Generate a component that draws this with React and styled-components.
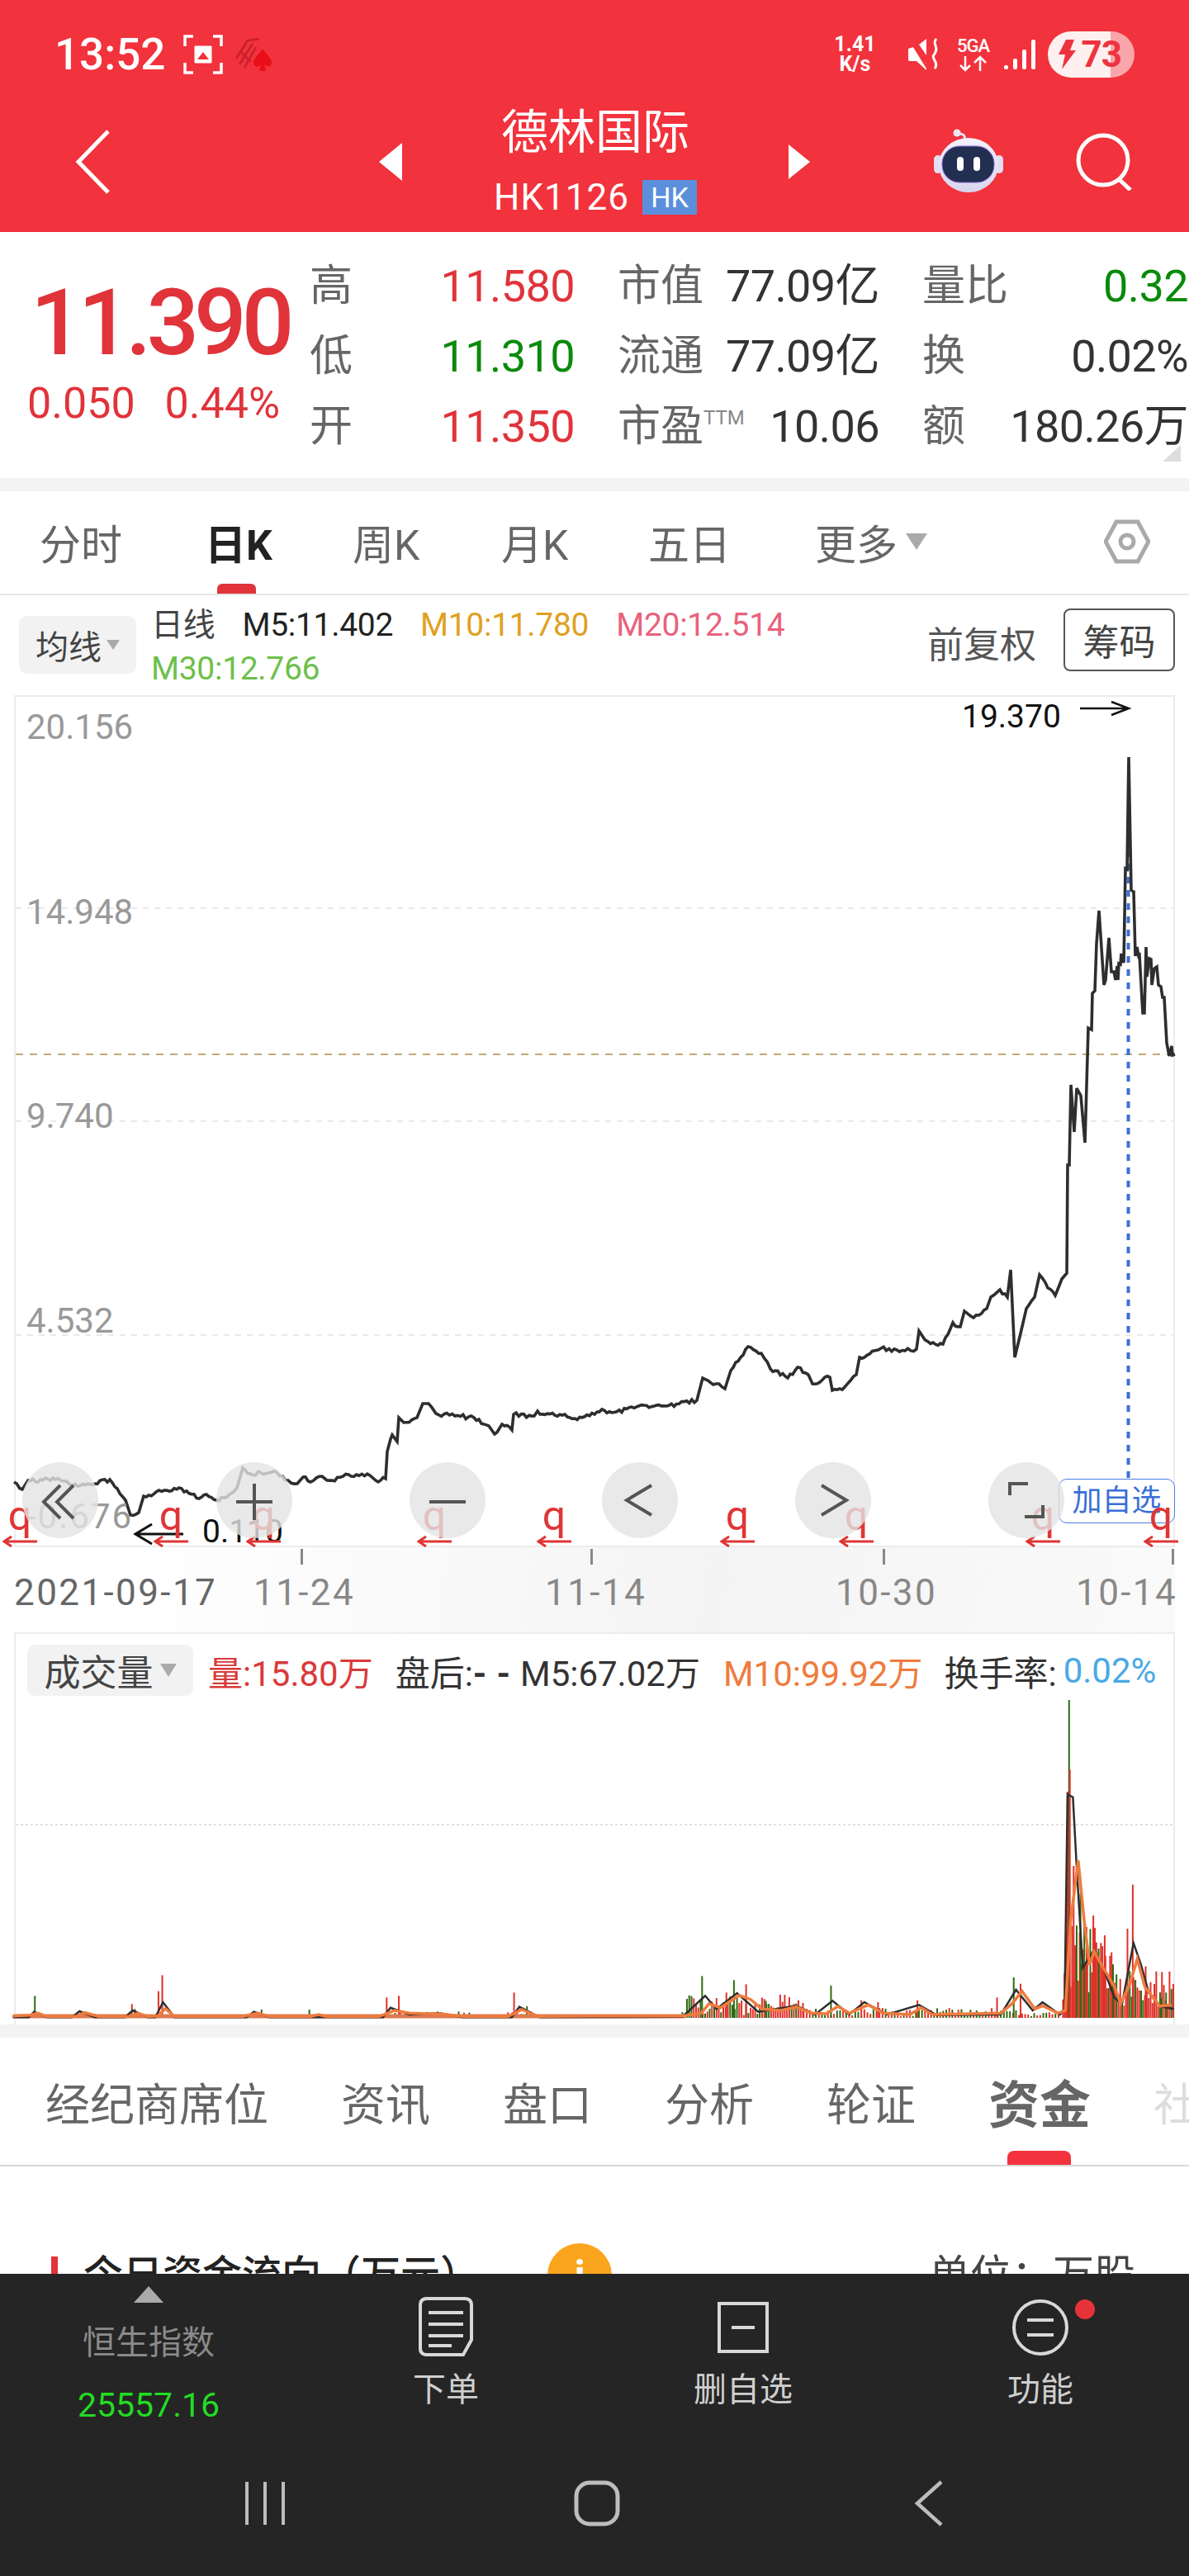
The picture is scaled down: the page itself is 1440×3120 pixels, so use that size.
import React from 'react';
import styled, { createGlobalStyle } from 'styled-components';

const GlobalStyle = createGlobalStyle`
  html, body { margin: 0; padding: 0; background: #fff; }
  body { font-family: Roboto, "Noto Sans CJK SC", sans-serif; }
  * { box-sizing: border-box; }
`;

const RED = '#e0333a';
const GREEN = '#0a8a0a';

const Page = styled.div`
  width: 1440px;
  height: 3120px;
  overflow: hidden;
  display: flex;
  flex-direction: column;
  background: #fff;
`;

/* header */
const Header = styled.header`
  height: 281px;
  background: #f2323c;
  color: #fff;
  flex: none;
`;

const StatusBar = styled.div`
  height: 100px;
  display: flex;
  align-items: center;
  padding: 32px 0 0 66px;
`;

const Clock = styled.span`
  font-size: 53px;
  font-weight: 500;
  line-height: 60px;
  margin-right: 22px;
`;

const Slot = styled.div`
  flex: none;
  display: flex;
  align-items: center;
  justify-content: center;
  width: ${(p) => p.$w}px;
  margin-left: ${(p) => p.$ml || 0}px;
`;

const NetSpeed = styled.div`
  width: 60px;
  margin-left: 675px;
  display: flex;
  flex-direction: column;
  align-items: center;
  font-size: 25px;
  font-weight: 700;
  line-height: 24px;
`;

const NetType = styled.div`
  width: 40px;
  margin-left: 18px;
  display: flex;
  flex-direction: column;
  align-items: center;
  font-size: 22px;
  font-weight: 500;
  line-height: 22px;
  letter-spacing: -1px;
`;

const Battery = styled.div`
  width: 105px;
  height: 56px;
  margin-left: 15px;
  border-radius: 28px;
  overflow: hidden;
  background: linear-gradient(90deg, #fff0f0 0 76px, #f9a6aa 76px);
  color: #ee3340;
  display: flex;
  align-items: center;
  gap: 6px;
  padding-left: 12px;
  font-size: 44px;
  font-weight: 700;
  letter-spacing: -1px;
`;

const NavBar = styled.div`
  height: 181px;
  padding: 10px 0 0 90px;
  display: flex;
  align-items: center;
`;

const TitleBlock = styled.div`
  width: 466px;
  display: flex;
  flex-direction: column;
  align-items: center;
`;

const StockName = styled.div`
  font-size: 57px;
  line-height: 66px;
`;

const StockCode = styled.div`
  display: flex;
  align-items: center;
  font-size: 44px;
  line-height: 50px;
  margin-top: 20px;
  letter-spacing: 1px;
`;

const MarketBadge = styled.span`
  background: #5b8fdc;
  width: 66px;
  height: 42px;
  margin-left: 16px;
  font-size: 34px;
  line-height: 42px;
  text-align: center;
  letter-spacing: 0;
`;

/* quote */
const Quote = styled.section`
  height: 314px;
  flex: none;
  position: relative;
  display: flex;
  border-bottom: 16px solid #f3f3f3;
`;

const PriceBox = styled.div`
  width: 375px;
  padding: 54px 0 0 33px;
  color: ${RED};
`;

const BigPrice = styled.div`
  font-size: 112px;
  font-weight: 500;
  line-height: 112px;
  margin-left: 4px;
  letter-spacing: -6px;
`;

const PriceChange = styled.div`
  font-size: 52px;
  line-height: 60px;
  margin-top: 12px;
  display: flex;
  gap: 36px;
`;

const QuoteGrid = styled.div`
  display: grid;
  grid-template-columns: 321px 317px 322px;
  grid-template-rows: repeat(3, 85px);
  column-gap: 52px;
  padding-top: 23px;
  align-items: center;
`;

const QuoteCell = styled.div`
  display: flex;
  justify-content: space-between;
  align-items: center;
  white-space: nowrap;
`;

const QuoteLabel = styled.span`
  color: #666;
  font-size: 52px;
  line-height: 60px;
  & sup {
    font-size: 24px;
    line-height: 1;
    vertical-align: 20px;
    color: #888;
  }
`;

const QuoteValue = styled.span`
  color: ${(p) => p.$color || '#333'};
  font-size: 54px;
  line-height: 60px;
  letter-spacing: -0.6px;
`;

const Corner = styled.div`
  position: absolute;
  right: 10px;
  bottom: 20px;
  width: 0;
  height: 0;
  border-left: 22px solid transparent;
  border-bottom: 20px solid #ddd;
`;

/* period tabs */
const PeriodTabs = styled.nav`
  height: 126px;
  flex: none;
  display: grid;
  grid-template-columns: 200px 179px 180px 178px 202px 1fr auto;
  align-items: stretch;
  padding: 0 47px 0 48px;
  border-bottom: 2px solid #e6e6e6;
  font-size: 50px;
  color: #666;
`;

const PeriodTab = styled.div`
  position: relative;
  display: flex;
  align-items: center;
  padding-bottom: 2px;
  color: ${(p) => (p.$active ? '#222' : '#666')};
  font-weight: ${(p) => (p.$active ? 700 : 400)};
  &::after {
    content: '';
    display: ${(p) => (p.$active ? 'block' : 'none')};
    position: absolute;
    left: 15px;
    bottom: 0;
    width: 47px;
    height: 12px;
    border-radius: 6px 6px 0 0;
    background: ${RED};
  }
`;

const Caret = styled.i`
  display: inline-block;
  width: 0;
  height: 0;
  margin-left: ${(p) => p.$ml || 8}px;
  border-left: ${(p) => p.$s || 13}px solid transparent;
  border-right: ${(p) => p.$s || 13}px solid transparent;
  border-top: ${(p) => (p.$s || 13) * 1.6}px solid #aaa;
  align-self: center;
`;

/* MA legend */
const Legend = styled.div`
  height: 121px;
  flex: none;
  display: flex;
  align-items: flex-start;
  padding: 10px 17px 0 23px;
`;

const DropBox = styled.div`
  flex: none;
  display: flex;
  align-items: center;
  justify-content: center;
  width: ${(p) => p.$w}px;
  height: ${(p) => p.$h}px;
  margin-top: ${(p) => p.$mt || 0}px;
  background: #f2f2f2;
  border-radius: 10px;
  color: #444;
  font-size: ${(p) => p.$fs}px;
`;

const MaBlock = styled.div`
  margin-left: 18px;
  font-size: 39px;
  line-height: 53px;
  width: 800px;
`;

const MaRow = styled.div`
  display: flex;
  gap: 33px;
  white-space: nowrap;
`;

const MaItem = styled.span`
  color: ${(p) => p.$color};
  letter-spacing: -0.3px;
`;

const Adjust = styled.div`
  margin-left: auto;
  display: flex;
  align-items: flex-start;
  gap: 33px;
  font-size: 44px;
  color: #555;
`;

const AdjustText = styled.span`
  margin-top: 24px;
  line-height: 54px;
`;

const ChipButton = styled.div`
  width: 135px;
  height: 76px;
  margin-top: 6px;
  border: 2px solid #555;
  border-radius: 8px;
  display: flex;
  align-items: center;
  justify-content: center;
  color: #444;
`;

/* price chart */
const ChartArea = styled.div`
  position: relative;
  flex: none;
  height: 1032px;
  padding: 0 17px;
`;

const ChartFrame = styled.div`
  height: 100%;
  border: 2px solid #ececec;
`;

const ChartSvg = styled.svg`
  display: block;
  overflow: visible;
`;

const Pinned = styled.div.attrs((p) => ({
  style: { left: p.$x, top: p.$y - 842 },
}))`
  position: absolute;
`;

const AxisValue = styled(Pinned)`
  font-size: 42px;
  line-height: 50px;
  color: #999;
  letter-spacing: ${(p) => p.$track || 0}px;
`;

const Extreme = styled(Pinned)`
  font-size: 39px;
  line-height: 44px;
  color: #111;
`;

const AddButton = styled(Pinned)`
  width: 141px;
  height: 54px;
  border: 1px solid #4a7ee0;
  border-radius: 10px;
  background: #fff;
  color: #3a6fd8;
  font-size: 36px;
  line-height: 52px;
  text-align: center;
`;

const Marker = styled(Pinned)`
  width: 42px;
  display: flex;
  flex-direction: column;
  align-items: center;
  color: #e03535;
  font-size: 50px;
  line-height: 46px;
`;

const RoundButton = styled(Pinned)`
  width: 92px;
  height: 92px;
  border-radius: 50%;
  background: rgba(228, 228, 228, 0.8);
  display: flex;
  align-items: center;
  justify-content: center;
`;

/* date axis */
const DateAxis = styled.div`
  position: relative;
  flex: none;
  height: 103px;
  margin: 0 17px;
  background: linear-gradient(100deg, #fff 10%, #f4f4f4 60%, #fafafa);
  color: #888;
  font-size: 44px;
  letter-spacing: 2.4px;
`;

const DateLabel = styled.span`
  position: absolute;
  top: 30px;
  line-height: 50px;
  white-space: nowrap;
  left: ${(p) => p.$x - 17}px;
  color: ${(p) => p.$color || '#888'};
`;

const Tick = styled.i`
  position: absolute;
  top: 2px;
  width: 3px;
  height: 19px;
  background: #888;
  left: ${(p) => p.$x - 17}px;
`;

/* volume */
const VolumeFrame = styled.div`
  flex: none;
  height: 475px;
  margin: 0 17px;
  border: 2px solid #ececec;
  border-bottom: 0;
`;

const VolumeHeader = styled.div`
  height: 77px;
  display: flex;
  align-items: flex-start;
  padding: 13px 0 0 14px;
  font-size: 42px;
  white-space: nowrap;
`;

const VolumeStats = styled.div`
  display: flex;
  align-items: center;
  height: 62px;
  margin-left: 18px;
`;

const VolumeStat = styled.span`
  color: ${(p) => p.$color || '#333'};
  margin-right: ${(p) => p.$mr || 0}px;
`;

const WideDashes = styled.span`
  letter-spacing: 12px;
  font-weight: 700;
`;

const Divider = styled.div`
  height: 16px;
  flex: none;
  background: #f3f3f3;
`;

/* detail tabs */
const DetailTabs = styled.nav`
  height: 156px;
  flex: none;
  display: flex;
  align-items: stretch;
  padding-left: 55px;
  gap: 88px;
  border-bottom: 2px solid #d9d9d9;
  overflow: hidden;
  font-size: 54px;
  white-space: nowrap;
`;

const DetailTab = styled.div`
  position: relative;
  display: flex;
  align-items: center;
  flex: none;
  margin-left: ${(p) => p.$ml || 0}px;
  color: ${(p) => p.$color || '#666'};
  font-size: ${(p) => (p.$active ? 62 : 54)}px;
  font-weight: ${(p) => (p.$active ? 700 : 400)};
  &::after {
    content: '';
    display: ${(p) => (p.$active ? 'block' : 'none')};
    position: absolute;
    left: 23px;
    bottom: 0;
    width: 77px;
    height: 17px;
    border-radius: 8px 8px 0 0;
    background: #f2323c;
  }
`;

const FlowSection = styled.section`
  flex: 1;
  min-height: 0;
  overflow: hidden;
  display: flex;
  padding: 93px 65px 0 62px;
  align-items: flex-start;
`;

const FlowBar = styled.i`
  width: 8px;
  height: 60px;
  margin-top: 16px;
  background: ${RED};
  flex: none;
`;

const FlowTitle = styled.div`
  margin-left: 31px;
  font-size: 48px;
  font-weight: 500;
  line-height: 60px;
  color: #222;
  margin-top: 9px;
  white-space: nowrap;
`;

const InfoDot = styled.div`
  width: 78px;
  height: 78px;
  margin-left: 82px;
  border-radius: 50%;
  background: #fba41e;
  color: #fff;
  font-size: 50px;
  font-weight: 700;
  line-height: 78px;
  text-align: center;
  flex: none;
`;

const FlowUnit = styled.div`
  margin-left: auto;
  font-size: 50px;
  line-height: 60px;
  margin-top: 9px;
  color: #444;
`;

/* bottom */
const Bottom = styled.footer`
  height: 366px;
  flex: none;
  background: #252525;
  display: flex;
  flex-direction: column;
`;

const ToolBar = styled.div`
  height: 250px;
  display: grid;
  grid-template-columns: repeat(4, 360px);
`;

const IndexItem = styled.div`
  display: flex;
  flex-direction: column;
  align-items: center;
  padding-top: 15px;
`;

const UpTriangle = styled.i`
  width: 0;
  height: 0;
  border-left: 18px solid transparent;
  border-right: 18px solid transparent;
  border-bottom: 20px solid #aaa;
`;

const IndexName = styled.div`
  font-size: 40px;
  line-height: 50px;
  margin-top: 24px;
  color: #8a8a8a;
`;

const IndexValue = styled.div`
  font-size: 41px;
  line-height: 50px;
  margin-top: 25px;
  color: #22dd22;
`;

const ToolItem = styled.div`
  position: relative;
  display: flex;
  flex-direction: column;
  align-items: center;
  padding-top: 28px;
`;

const ToolIcon = styled.svg`
  margin-top: ${(p) => p.$mt || 0}px;
  fill: none;
  stroke: #d8d8d8;
  stroke-width: 4;
`;

const ToolLabel = styled.div`
  position: absolute;
  top: 116px;
  font-size: 40px;
  line-height: 50px;
  color: #cfcfcf;
`;

const Notice = styled.i`
  position: absolute;
  left: 222px;
  top: 31px;
  width: 24px;
  height: 24px;
  border-radius: 50%;
  background: #e8323a;
`;

const SystemNav = styled.div`
  display: grid;
  grid-template-columns: repeat(3, 402px);
  padding-left: 120px;
`;

const SystemButton = styled.div`
  display: flex;
  justify-content: center;
`;

/* chart data, page coordinates */
const priceKnots = [
  [17,1795],[27,1804],[34,1793],[67,1792],[94,1800],[115,1797],[133,1792],[142,1803],[152,1817],[158,1835],[168,1832],[174,1812],
  [202,1805],[220,1803],[241,1815],[250,1810],[262,1817],[275,1813],[287,1802],[294,1778],[303,1785],[335,1783],[349,1793],[360,1797],
  [367,1789],[376,1795],[390,1788],[402,1793],[422,1786],[448,1787],[455,1793],[467,1791],[469,1758],[473,1743],[475,1738],[481,1746],
  [483,1717],[489,1723],[505,1717],[512,1700],[519,1700],[528,1712],[551,1715],[574,1717],[592,1727],[599,1737],[608,1725],[620,1732],
  [622,1713],[647,1715],[651,1709],[654,1713],[684,1713],[696,1718],[720,1713],[729,1707],[741,1711],[780,1702],[807,1703],[844,1696],
  [851,1669],[867,1676],[878,1682],[885,1660],[897,1644],[906,1631],[922,1639],[933,1658],[954,1669],[966,1656],[979,1665],[984,1676],
  [1005,1668],[1008,1684],[1023,1680],[1037,1665],[1041,1644],[1053,1640],[1067,1633],[1096,1636],[1110,1634],[1113,1612],[1124,1625],
  [1142,1628],[1154,1602],[1163,1607],[1168,1588],[1179,1596],[1195,1585],[1200,1571],[1211,1562],[1220,1571],[1224,1538],[1229,1644],
  [1236,1615],[1243,1585],[1253,1571],[1259,1544],[1269,1560],[1278,1569],[1286,1549],[1292,1542],[1293,1411],[1295,1411],[1297,1314],
  [1301,1371],[1304,1318],[1309,1327],[1314,1384],[1318,1245],[1322,1247],[1323,1203],[1326,1200],[1328,1143],[1331,1103],[1337,1193],
  [1339,1187],[1343,1136],[1346,1177],[1349,1177],[1351,1187],[1353,1170],[1354,1187],[1355,1167],[1357,1168],[1358,1155],[1361,1166],
  [1363,1052],[1365,1053],[1367,917],[1370,1078],[1373,1080],[1375,1158],[1377,1147],[1379,1158],[1380,1157],[1384,1227],[1386,1227],
  [1388,1147],[1389,1183],[1392,1161],[1394,1162],[1395,1193],[1398,1173],[1401,1171],[1403,1193],[1406,1195],[1408,1208],[1410,1208],
  [1413,1263],[1416,1279],[1419,1267],[1420,1278],[1423,1277],
];

const wobble = (i) => {
  const v = Math.sin(i * 127.1) * 43758.5453;
  return v - Math.floor(v);
};

// small jitter on the long flat stretches so the line looks like daily ticks
const roughen = (knots) => {
  const out = [];
  knots.forEach(([x, y], i) => {
    out.push([x, y]);
    const next = knots[i + 1];
    if (!next || next[0] - x < 8) return;
    const steps = Math.floor((next[0] - x) / 3);
    for (let s = 1; s < steps; s++) {
      const t = s / steps;
      out.push([x + (next[0] - x) * t, y + (next[1] - y) * t + (wobble(i * 31 + s) - 0.5) * 5]);
    }
  });
  return out;
};

const toPoints = (list) => list.map(([x, y]) => `${x.toFixed(1)},${y.toFixed(1)}`).join(' ');

const volX = (x) => x / 1.089;
const volY = (y) => y / 3 + 1960;
const volLine = (list) => toPoints(list.map(([x, y]) => [volX(x), volY(y)]));

const tallBars = [
  [46,1372,'g'],[174,1402,'r'],[178,1420,'g'],[209,1355,'r'],[214,1297,'r'],[345,1422,'g'],[408,1422,'g'],[510,1378,'r'],[526,1372,'r'],
  [678,1360,'r'],[695,1410,'g'],[926,1300,'g'],[958,1360,'r'],[968,1315,'g'],[984,1330,'r'],[1010,1390,'g'],[1096,1335,'g'],
  [1136,1388,'r'],[1158,1395,'r'],[1210,1388,'r'],[1315,1378,'r'],[1337,1305,'g'],[1346,1328,'r'],[1402,1385,'r'],[1408,630,'r'],
  [1410,297,'g'],[1411,550,'r'],[1416,900,'r'],[1425,1000,'g'],[1433,1122,'r'],[1442,1080,'r'],[1449,1200,'g'],[1457,1152,'r'],
  [1487,1128,'r'],[1494,968,'r'],[1511,1265,'r'],[1538,1360,'g'],[1532,1380,'g'],
];

const denseBars = (() => {
  const bars = [];
  const add = (from, to, step, min, max, greenShare) => {
    for (let x = from; x < to; x += step) {
      const h = min + (max - min) * wobble(x * 3.7);
      bars.push([x, 1452 - h, wobble(x * 9.1) > greenShare ? 'r' : 'g']);
    }
  };
  add(18, 230, 9, 2, 14, 0.5);
  add(320, 360, 8, 2, 14, 0.5);
  add(500, 620, 7, 3, 24, 0.5);
  add(670, 710, 6, 4, 26, 0.5);
  add(900, 1060, 3, 10, 85, 0.45);
  add(1060, 1400, 4, 6, 36, 0.45);
  add(1404, 1470, 2, 90, 340, 0.3);
  add(1470, 1550, 2.5, 40, 170, 0.35);
  return bars;
})();

const orangeLine = [
  [17,1445],[40,1442],[50,1435],[62,1447],[100,1447],[112,1433],[130,1447],[170,1447],[182,1435],[195,1447],[208,1445],[218,1418],[230,1447],
  [320,1447],[340,1435],[355,1447],[410,1447],[420,1440],[430,1447],[500,1447],[520,1425],[540,1435],[560,1437],[580,1437],[610,1447],
  [670,1447],[688,1422],[710,1447],[790,1445],[900,1445],[925,1435],[935,1400],[950,1415],[975,1370],[990,1385],[1005,1420],[1030,1425],
  [1050,1412],[1070,1435],[1090,1437],[1105,1410],[1120,1435],[1145,1405],[1165,1435],[1200,1440],[1215,1415],[1230,1440],[1320,1435],
  [1335,1400],[1348,1355],[1365,1420],[1375,1408],[1395,1435],[1405,1425],[1412,1100],[1422,880],[1430,1100],[1437,1260],[1443,1210],
  [1455,1270],[1470,1340],[1478,1400],[1490,1330],[1500,1238],[1510,1340],[1530,1410],[1545,1405],
];

// stays on the baseline between the small bumps
const blackLine = [
  [17,1450],[38,1450],[45,1430],[62,1450],[95,1450],[105,1428],[125,1450],[165,1450],[175,1425],[195,1450],[205,1450],[215,1395],[230,1450],
  [325,1450],[335,1430],[355,1450],[505,1450],[515,1415],[540,1440],[580,1435],[610,1450],[675,1450],[685,1412],[712,1450],[900,1448],
  [930,1372],[945,1420],[972,1362],[1000,1430],[1050,1408],[1075,1440],[1098,1390],[1120,1440],[1140,1395],[1170,1440],[1212,1405],
  [1235,1442],[1320,1440],[1340,1350],[1362,1425],[1375,1395],[1398,1440],[1404,1420],[1408,640],[1415,650],[1420,900],[1428,1270],
  [1443,1205],[1455,1270],[1470,1380],[1480,1400],[1495,1180],[1505,1260],[1515,1360],[1530,1410],[1548,1420],
];

const markers = [3, 186, 298, 505, 650, 872, 1016, 1242, 1385];

const PriceChart = () => (
  <ChartSvg width="1403" height="1028" viewBox="19 844 1403 1028">
    {[1100, 1358, 1617].map((y) => (
      <line key={y} x1="19" x2="1422" y1={y} y2={y} stroke="#e2e2e2" strokeWidth="1.5" strokeDasharray="7 7" />
    ))}
    <line x1="19" x2="1422" y1="1277" y2="1277" stroke="#c4a878" strokeWidth="2" strokeDasharray="9 8" />
    <line x1="1366.5" x2="1366.5" y1="1030" y2="1790" stroke="#3d6fd6" strokeWidth="4" strokeDasharray="8 8" />
    <polyline points={toPoints(roughen(priceKnots))} fill="none" stroke="#2e2e2e" strokeWidth="3.6" strokeLinejoin="miter" strokeMiterlimit="3" />
    <path d="M1308 858H1366M1346 850L1367 858L1346 866" fill="none" stroke="#111" strokeWidth="2.5" />
    <path d="M222 1858H164M184 1846L164 1858L184 1870" fill="none" stroke="#111" strokeWidth="3" />
  </ChartSvg>
);

const VolumeChart = () => (
  <ChartSvg width="1403" height="394" viewBox="19 2056 1403 394">
    <line x1="19" x2="1422" y1="2210" y2="2210" stroke="#d8d8d8" strokeWidth="1.5" strokeDasharray="3 3" />
    {denseBars.concat(tallBars).map(([x, y, c], i) => (
      <line key={i} x1={volX(x)} x2={volX(x)} y1={volY(y)} y2="2444" stroke={c === 'g' ? '#2f6a10' : '#e0302a'} strokeWidth="2" />
    ))}
    <line x1="17" x2="830" y1="2442" y2="2442" stroke="#dd7a50" strokeWidth="5" />
    <polyline points={volLine(blackLine)} fill="none" stroke="#2e2e2e" strokeWidth="2.5" />
    <polyline points={volLine(orangeLine)} fill="none" stroke="#ef7b3e" strokeWidth="3.5" />
  </ChartSvg>
);

const RedArrow = () => (
  <svg width="42" height="16" viewBox="0 0 42 16">
    <path d="M42 8H2M11 2L2 8L11 14" fill="none" stroke="#e03535" strokeWidth="3" />
  </svg>
);

const GlyphIcon = ({ d }) => (
  <svg width="60" height="60" viewBox="0 0 60 60">
    <path d={d} fill="none" stroke="#555" strokeWidth="4" />
  </svg>
);

const Triangle = ({ dir }) => (
  <svg width="30" height="48" viewBox="0 0 30 48">
    <path d={dir === 'left' ? 'M29 1V47L1 24Z' : 'M1 3V45L27 24Z'} fill="#fff" />
  </svg>
);

const Robot = () => (
  <svg width="86" height="80" viewBox="0 0 86 80">
    <defs>
      <linearGradient id="head" x1="0" y1="0" x2="0" y2="1">
        <stop offset="0" stopColor="#f4f2fb" />
        <stop offset="1" stopColor="#d9d4ef" />
      </linearGradient>
    </defs>
    <path d="M38 14C40 6 34 6 30 6" fill="none" stroke="#e9e4f4" strokeWidth="3" />
    <circle cx="29" cy="5" r="4.5" fill="#ece8f6" />
    <rect x="1" y="32" width="10" height="22" rx="5" fill="#e3dff1" />
    <rect x="75" y="32" width="10" height="22" rx="5" fill="#e3dff1" />
    <ellipse cx="43" cy="44" rx="36" ry="33" fill="url(#head)" />
    <rect x="11" y="21" width="63" height="44" rx="21" fill="#222f50" stroke="#8a6ad8" strokeWidth="1" />
    <rect x="29" y="34" width="8" height="17" rx="4" fill="#fff" />
    <rect x="49" y="34" width="8" height="17" rx="4" fill="#fff" />
  </svg>
);

const FanSpade = () => (
  <svg width="48" height="42" viewBox="0 0 48 42">
    <path d="M4 26L18 4L32 2M8 33L24 8M14 37L28 12M10 18L22 30" fill="none" stroke="#c8202a" strokeWidth="2.5" />
    <path d="M36 14C42 22 47 26 47 31C47 36 41 37 38 33L40 41H32L34 33C31 37 25 36 25 31C25 26 31 22 36 14Z" fill="#e80f18" />
  </svg>
);

export default function App() {
  return (
    <Page>
      <GlobalStyle />
      <Header>
        <StatusBar>
          <Clock>13:52</Clock>
          <Slot $w={48}>
            <svg width="48" height="48" viewBox="0 0 48 48" fill="none" stroke="#fff" strokeWidth="3.5">
              <path d="M12 2H2V14M12 46H2V34M36 2H46V14M36 46H46V34" />
              <path d="M14 14H34V34H14Z" fill="#fff" strokeWidth="1" />
              <path d="M17 30L24 21L31 30Z" fill="#f2323c" stroke="none" />
            </svg>
          </Slot>
          <Slot $w={48} $ml={12}>
            <FanSpade />
          </Slot>
          <NetSpeed>
            <span>1.41</span>
            <span>K/s</span>
          </NetSpeed>
          <Slot $w={42} $ml={33}>
            <svg width="42" height="42" viewBox="0 0 42 42" fill="#fff">
              <path d="M2 14L8 12L24 32V40L12 29H4Q2 29 2 27ZM15 9L24 2V22Z" />
              <path d="M3 1L25 37" stroke="#f2323c" strokeWidth="3" />
              <path d="M36 2C30 8 40 12 34 20C28 26 40 30 34 38" fill="none" stroke="#fff" strokeWidth="3" />
            </svg>
          </Slot>
          <NetType>
            <span>5GA</span>
            <svg width="36" height="20" viewBox="0 0 36 20" fill="none" stroke="#fff" strokeWidth="2.5">
              <path d="M9 1V18M3 12L9 18L15 12M27 19V2M20 9L27 2L34 9" />
            </svg>
          </NetType>
          <Slot $w={38} $ml={18}>
            <svg width="38" height="38" viewBox="0 0 38 38" fill="#fff">
              <rect x="0" y="32" width="5" height="5" rx="2" />
              <rect x="11" y="24" width="5" height="13" rx="2" />
              <rect x="22" y="13" width="5" height="24" rx="2" />
              <rect x="33" y="1" width="5" height="36" rx="2" />
            </svg>
          </Slot>
          <Battery>
            <svg width="22" height="36" viewBox="0 0 22 36" fill="#ee3340">
              <path d="M10 0H20L15 13H22L5 36L9 18H1Z" />
            </svg>
            <span>73</span>
          </Battery>
        </StatusBar>
        <NavBar>
          <Slot $w={44}>
            <svg width="44" height="78" viewBox="0 0 44 78" fill="none" stroke="#fff" strokeWidth="5">
              <path d="M41 2L5 39L41 76" />
            </svg>
          </Slot>
          <Slot $w={30} $ml={324}>
            <Triangle dir="left" />
          </Slot>
          <TitleBlock>
            <StockName>德林国际</StockName>
            <StockCode>
              HK1126
              <MarketBadge>HK</MarketBadge>
            </StockCode>
          </TitleBlock>
          <Slot $w={30}>
            <Triangle dir="right" />
          </Slot>
          <Slot $w={86} $ml={146}>
            <Robot />
          </Slot>
          <Slot $w={70} $ml={87}>
            <svg width="70" height="70" viewBox="0 0 70 70" fill="none" stroke="#fff" strokeWidth="5">
              <circle cx="33" cy="33" r="30" />
              <path d="M52 56L66 69" />
            </svg>
          </Slot>
        </NavBar>
      </Header>

      <Quote>
        <PriceBox>
          <BigPrice>11.390</BigPrice>
          <PriceChange>
            <span>0.050</span>
            <span>0.44%</span>
          </PriceChange>
        </PriceBox>
        <QuoteGrid>
          <QuoteCell><QuoteLabel>高</QuoteLabel><QuoteValue $color={RED}>11.580</QuoteValue></QuoteCell>
          <QuoteCell><QuoteLabel>市值</QuoteLabel><QuoteValue>77.09亿</QuoteValue></QuoteCell>
          <QuoteCell><QuoteLabel>量比</QuoteLabel><QuoteValue $color={GREEN}>0.32</QuoteValue></QuoteCell>
          <QuoteCell><QuoteLabel>低</QuoteLabel><QuoteValue $color={GREEN}>11.310</QuoteValue></QuoteCell>
          <QuoteCell><QuoteLabel>流通</QuoteLabel><QuoteValue>77.09亿</QuoteValue></QuoteCell>
          <QuoteCell><QuoteLabel>换</QuoteLabel><QuoteValue>0.02%</QuoteValue></QuoteCell>
          <QuoteCell><QuoteLabel>开</QuoteLabel><QuoteValue $color={RED}>11.350</QuoteValue></QuoteCell>
          <QuoteCell><QuoteLabel>市盈<sup>TTM</sup></QuoteLabel><QuoteValue>10.06</QuoteValue></QuoteCell>
          <QuoteCell><QuoteLabel>额</QuoteLabel><QuoteValue>180.26万</QuoteValue></QuoteCell>
        </QuoteGrid>
        <Corner />
      </Quote>

      <PeriodTabs>
        <PeriodTab>分时</PeriodTab>
        <PeriodTab $active>日K</PeriodTab>
        <PeriodTab>周K</PeriodTab>
        <PeriodTab>月K</PeriodTab>
        <PeriodTab>五日</PeriodTab>
        <PeriodTab>更多<Caret $ml={10} $s={13} /></PeriodTab>
        <PeriodTab>
          <svg width="56" height="56" viewBox="0 0 56 56" fill="none" stroke="#aaa" strokeWidth="5">
            <path d="M15 4H41L54 28L41 52H15L2 28Z" />
            <circle cx="28" cy="28" r="8" />
          </svg>
        </PeriodTab>
      </PeriodTabs>

      <Legend>
        <DropBox $w={142} $h={70} $mt={15} $fs={40}>均线<Caret $ml={6} $s={8} /></DropBox>
        <MaBlock>
          <MaRow>
            <MaItem $color="#444">日线</MaItem>
            <MaItem $color="#222">M5:11.402</MaItem>
            <MaItem $color="#e0a020">M10:11.780</MaItem>
            <MaItem $color="#e9627c">M20:12.514</MaItem>
          </MaRow>
          <MaRow>
            <MaItem $color="#6cc04a">M30:12.766</MaItem>
          </MaRow>
        </MaBlock>
        <Adjust>
          <AdjustText>前复权</AdjustText>
          <ChipButton>筹码</ChipButton>
        </Adjust>
      </Legend>

      <ChartArea>
        <ChartFrame>
          <PriceChart />
        </ChartFrame>
        <AxisValue $x={32} $y={856}>20.156</AxisValue>
        <AxisValue $x={32} $y={1080}>14.948</AxisValue>
        <AxisValue $x={32} $y={1327}>9.740</AxisValue>
        <AxisValue $x={32} $y={1575}>4.532</AxisValue>
        <AxisValue $x={32} $y={1812} $track={2}>-0.676</AxisValue>
        <Extreme $x={1165} $y={846}>19.370</Extreme>
        <Extreme $x={245} $y={1833}>0.110</Extreme>
        <AddButton $x={1282} $y={1791}>加自选</AddButton>
        {markers.map((x) => (
          <Marker key={x} $x={x} $y={1813}>
            <span>q</span>
            <RedArrow />
          </Marker>
        ))}
        <RoundButton $x={27} $y={1771}><GlyphIcon d="M30 12L10 32L30 52M46 12L26 32L46 52" /></RoundButton>
        <RoundButton $x={262} $y={1771}><GlyphIcon d="M30 10V54M8 32H52" /></RoundButton>
        <RoundButton $x={496} $y={1771}><GlyphIcon d="M8 32H52" /></RoundButton>
        <RoundButton $x={729} $y={1771}><GlyphIcon d="M44 12L14 30L44 48" /></RoundButton>
        <RoundButton $x={963} $y={1771}><GlyphIcon d="M16 12L46 30L16 48" /></RoundButton>
        <RoundButton $x={1197} $y={1771}><GlyphIcon d="M32 10H10V24M28 50H50V36" /></RoundButton>
      </ChartArea>

      <DateAxis>
        <Tick $x={364} /><Tick $x={715} /><Tick $x={1069} /><Tick $x={1419} />
        <DateLabel $x={17} $color="#666">2021-09-17</DateLabel>
        <DateLabel $x={307}>11-24</DateLabel>
        <DateLabel $x={660}>11-14</DateLabel>
        <DateLabel $x={1012}>10-30</DateLabel>
        <DateLabel $x={1303}>10-14</DateLabel>
      </DateAxis>

      <VolumeFrame>
        <VolumeHeader>
          <DropBox $w={201} $h={62} $fs={44}>成交量<Caret $ml={8} $s={10} /></DropBox>
          <VolumeStats>
            <VolumeStat $color="#d93a3a" $mr={27}>量:15.80万</VolumeStat>
            <VolumeStat $mr={28}>盘后:<WideDashes>--</WideDashes>M5:67.02万</VolumeStat>
            <VolumeStat $color="#ef7b3e" $mr={26}>M10:99.92万</VolumeStat>
            <VolumeStat $mr={8}>换手率:</VolumeStat>
            <VolumeStat $color="#4aa8e4">0.02%</VolumeStat>
          </VolumeStats>
        </VolumeHeader>
        <VolumeChart />
      </VolumeFrame>
      <Divider />

      <DetailTabs>
        <DetailTab>经纪商席位</DetailTab>
        <DetailTab>资讯</DetailTab>
        <DetailTab>盘口</DetailTab>
        <DetailTab>分析</DetailTab>
        <DetailTab>轮证</DetailTab>
        <DetailTab $active>资金</DetailTab>
        <DetailTab $color="#ddd" $ml={-12}>社区</DetailTab>
      </DetailTabs>

      <FlowSection>
        <FlowBar />
        <FlowTitle>今日资金流向（万元）</FlowTitle>
        <InfoDot>i</InfoDot>
        <FlowUnit>单位：万股</FlowUnit>
      </FlowSection>

      <Bottom>
        <ToolBar>
          <IndexItem>
            <UpTriangle />
            <IndexName>恒生指数</IndexName>
            <IndexValue>25557.16</IndexValue>
          </IndexItem>
          <ToolItem>
            <ToolIcon width="66" height="72" viewBox="0 0 66 72">
              <path d="M10 2H56Q64 2 64 10V52L54 70H10Q2 70 2 62V10Q2 2 10 2Z" />
              <path d="M12 19H54M12 33H54M12 47H54M12 59H40" />
            </ToolIcon>
            <ToolLabel>下单</ToolLabel>
          </ToolItem>
          <ToolItem>
            <ToolIcon $mt={6} width="62" height="62" viewBox="0 0 62 62">
              <path d="M2 2H60V60H2Z" />
              <path d="M17 31H45" />
            </ToolIcon>
            <ToolLabel>删自选</ToolLabel>
          </ToolItem>
          <ToolItem>
            <ToolIcon $mt={2} width="70" height="70" viewBox="0 0 70 70">
              <circle cx="35" cy="35" r="32" />
              <path d="M19 26H51M19 44H51" />
            </ToolIcon>
            <ToolLabel>功能</ToolLabel>
            <Notice />
          </ToolItem>
        </ToolBar>
        <SystemNav>
          <SystemButton>
            <svg width="50" height="56" viewBox="0 0 50 56" fill="none" stroke="#bdbdbd" strokeWidth="4">
              <path d="M3 2V54M25 2V54M47 2V54" />
            </svg>
          </SystemButton>
          <SystemButton>
            <svg width="56" height="56" viewBox="0 0 56 56" fill="none" stroke="#bdbdbd" strokeWidth="5">
              <rect x="3" y="3" width="50" height="50" rx="16" />
            </svg>
          </SystemButton>
          <SystemButton>
            <svg width="36" height="56" viewBox="0 0 36 56" fill="none" stroke="#bdbdbd" strokeWidth="4.5">
              <path d="M33 2L4 28L33 54" />
            </svg>
          </SystemButton>
        </SystemNav>
      </Bottom>
    </Page>
  );
}
